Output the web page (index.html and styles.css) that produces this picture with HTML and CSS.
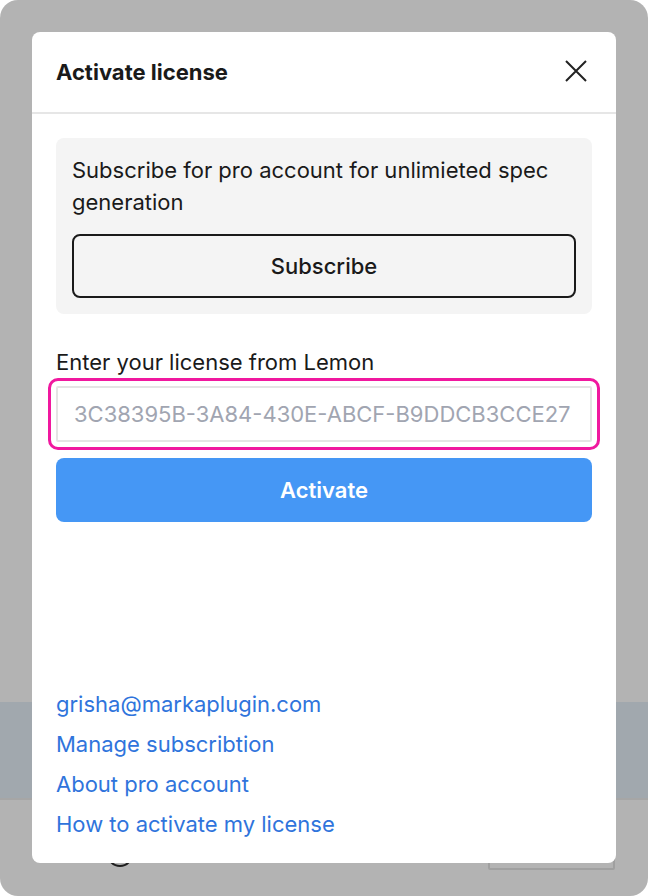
FILE: index.html
```html
<!DOCTYPE html>
<html lang="en">
<head>
<meta charset="utf-8">
<title>Activate license</title>
<link rel="stylesheet" href="styles.css">
</head>
<body>
<div class="frame">
  <div class="page">
    <div class="band"></div>
    <div class="footer-row">
      <span class="circle"></span>
      <span class="ghost-box"></span>
    </div>
  </div>
  <div class="modal">
    <div class="modal-header">
      <h1 class="modal-title">Activate license</h1>
      <button class="close" aria-label="Close">
        <svg width="24" height="24" viewBox="0 0 24 24"><path d="M2 2 L22 22 M22 2 L2 22" stroke="#222" stroke-width="2" fill="none"/></svg>
      </button>
    </div>
    <div class="modal-body">
      <div class="card">
        <p class="card-text">Subscribe for pro account for unlimieted spec generation</p>
        <button class="btn-outline">Subscribe</button>
      </div>
      <label class="label" for="lic">Enter your license from Lemon</label>
      <input id="lic" class="input" type="text" placeholder="3C38395B-3A84-430E-ABCF-B9DDCB3CCE27">
      <button class="btn-primary">Activate</button>
      <div class="links">
        <a href="#">grisha@markaplugin.com</a>
        <a href="#">Manage subscribtion</a>
        <a href="#">About pro account</a>
        <a href="#">How to activate my license</a>
      </div>
    </div>
  </div>
</div>
</body>
</html>
```

FILE: styles.css
```css
* { box-sizing: border-box; }
html, body { margin: 0; padding: 0; background: #ffffff; }
body { font-family: Inter, "Noto Sans", sans-serif; color: #1a1a1a; }

.frame {
  position: relative;
  width: 648px;
  height: 896px;
  background: #b3b3b3;
  border-radius: 18px;
  overflow: hidden;
}

.page { display: flex; flex-direction: column; padding-top: 702px; }
.band { height: 98px; background: #a1a8ae; border-bottom: 2px solid #a6a6a6; }
.footer-row {
  display: flex;
  justify-content: space-between;
  align-items: flex-start;
  padding: 40px 33px 0 107px;
}
.circle {
  width: 26px; height: 26px;
  border: 2px solid #1e1e1e;
  border-radius: 50%;
  margin-top: 1px;
}
.ghost-box {
  width: 127px; height: 30px;
  border: 2px solid #a0a0a0;
  border-radius: 2px;
}

.modal {
  position: absolute;
  top: 32px; left: 32px;
  width: 584px; height: 831px;
  background: #fff;
  border-radius: 8px;
  display: flex;
  flex-direction: column;
}
.modal-header {
  height: 82px;
  border-bottom: 2px solid #e6e6e6;
  display: flex;
  align-items: center;
  justify-content: space-between;
  padding: 0 28px 0 24px;
}
.modal-title { margin: 0; font-size: 22px; font-weight: 700; color: #1a1a1a; }
.close { border: 0; background: none; padding: 0; width: 24px; height: 24px; display: flex; margin-top: -2px; }

.modal-body {
  flex: 1;
  display: flex;
  flex-direction: column;
  padding: 24px 24px 19px;
}
.card {
  background: #f4f4f4;
  border-radius: 8px;
  padding: 16px;
  display: flex;
  flex-direction: column;
  gap: 16px;
}
.card-text { margin: 0; font-size: 22px; line-height: 32px; }
.btn-outline {
  height: 64px;
  border: 2px solid #1a1a1a;
  border-radius: 8px;
  background: transparent;
  font-family: inherit;
  font-size: 22px;
  font-weight: 500;
  color: #1a1a1a;
}
.label { margin-top: 32px; font-size: 22px; line-height: 32px; }
.input {
  margin-top: 8px;
  height: 56px;
  border: 2px solid #e4e4e4;
  border-radius: 2px;
  padding: 0 16px;
  font-family: inherit;
  font-size: 22px;
  color: #1a1a1a;
  outline: 3px solid #f0189f;
  outline-offset: 5px;
}
.input::placeholder { color: #a1a5b1; }
.btn-primary {
  margin-top: 16px;
  height: 64px;
  border: 0;
  border-radius: 8px;
  background: #4597f5;
  color: #fff;
  font-family: inherit;
  font-size: 22px;
  font-weight: 600;
}
.links { margin-top: auto; display: flex; flex-direction: column; }
.links a { font-size: 22px; line-height: 40px; color: #2f74dc; text-decoration: none; }
```
